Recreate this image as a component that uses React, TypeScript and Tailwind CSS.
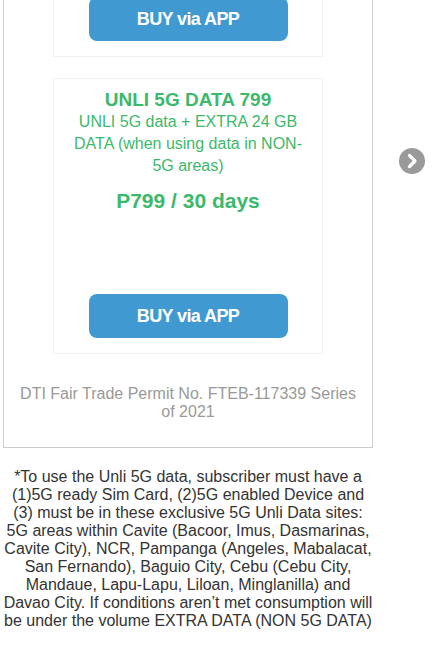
export default function App() {
  const green = 'text-[#3cb96a]';

  return (
    <div className="relative w-[432px] h-[671px] overflow-hidden bg-white font-['Liberation_Sans',Arial,sans-serif]">
      <div className="ml-[3px] w-[370px] -mt-[60px] border border-[#cccccc] px-[49px] pb-[26px]">
        {/* previous plan card (cut off at top) */}
        <div className="border border-[#f0f0f0] pt-[55px] pb-[15px] flex justify-center">
          <button className="w-[199px] h-[44px] rounded-[8px] bg-[#4199d2] text-white text-[18px] font-bold tracking-[-0.6px]">
            BUY via APP
          </button>
        </div>

        {/* UNLI 5G DATA 799 */}
        <div className="mt-[21px] border border-[#f0f0f0] px-[15px] pt-[10px] pb-[15px] flex flex-col items-center text-center">
          <h3 className={`${green} text-[19px] leading-[22px] font-bold`}>UNLI 5G DATA 799</h3>
          <p className={`${green} text-[16px] leading-[22px]`}>
            UNLI 5G data + EXTRA 24 GB DATA (when using data in NON-5G areas)
          </p>
          <p className={`${green} mt-[11px] text-[21px] leading-[26px] font-bold`}>P799 / 30 days</p>
          <button className="mt-[80px] w-[199px] h-[44px] rounded-[8px] bg-[#4199d2] text-white text-[18px] font-bold tracking-[-0.6px]">
            BUY via APP
          </button>
        </div>

        <p className="-mx-[34px] mt-[31px] text-center text-[16px] leading-[18px] text-[#999999]">
          DTI Fair Trade Permit No. FTEB-117339 Series of 2021
        </p>
      </div>

      <p className="ml-[3px] w-[370px] mt-[20px] text-center text-[16px] leading-[18px] text-[#333333]">
        *To use the Unli 5G data, subscriber must have a (1)5G ready Sim Card, (2)5G enabled Device and (3) must be in
        these exclusive 5G Unli Data sites: 5G areas within Cavite (Bacoor, Imus, Dasmarinas, Cavite City), NCR,
        Pampanga (Angeles, Mabalacat, San Fernando), Baguio City, Cebu (Cebu City, Mandaue, Lapu-Lapu, Liloan,
        Minglanilla) and Davao City. If conditions aren’t met consumption will be under the volume EXTRA DATA (NON 5G
        DATA)
      </p>

      {/* carousel next arrow */}
      <svg className="absolute left-[399px] top-[148px]" width="26" height="26" viewBox="0 0 26 26">
        <circle cx="13" cy="13" r="13" fill="#9a9a9a" />
        <path d="M10.5 7.5 L16 13 L10.5 18.5" fill="none" stroke="#fff" strokeWidth="3.2" strokeLinecap="round" strokeLinejoin="round" />
      </svg>
    </div>
  );
}
